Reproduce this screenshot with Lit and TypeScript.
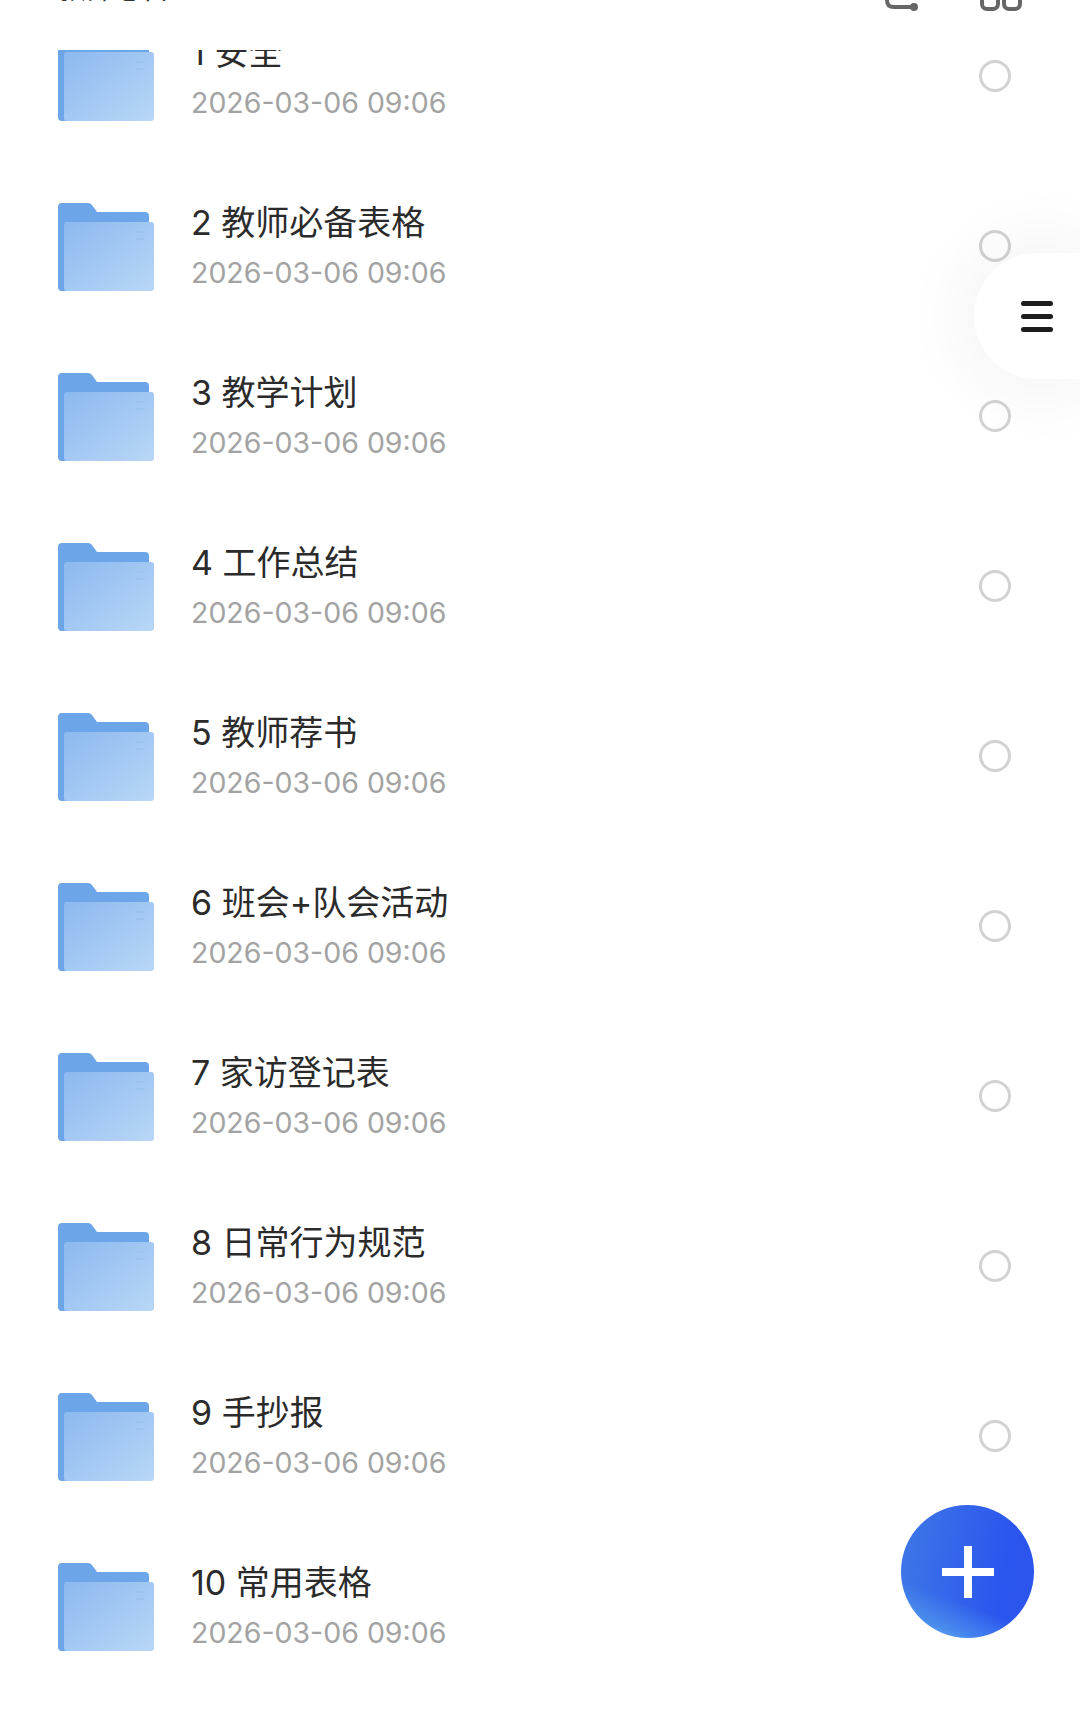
import { LitElement, css, html, svg } from 'lit';
import { customElement } from 'lit/decorators.js';

const rows = [
  '1 安全',
  '2 教师必备表格',
  '3 教学计划',
  '4 工作总结',
  '5 教师荐书',
  '6 班会+队会活动',
  '7 家访登记表',
  '8 日常行为规范',
  '9 手抄报',
  '10 常用表格',
];

const folderIcon = (id: number) => svg`
  <svg class="folder" viewBox="0 0 96 88" width="96" height="88">
    <defs>
      <linearGradient id="front${id}" x1="0" y1="0" x2="1" y2="1">
        <stop offset="0" stop-color="#8cb9ef" />
        <stop offset="1" stop-color="#b9d7f7" />
      </linearGradient>
    </defs>
    <path d="M0 4a4 4 0 0 1 4-4h26a5 5 0 0 1 4 2l5 7h48a4 4 0 0 1 4 4v71a4 4 0 0 1-4 4H4a4 4 0 0 1-4-4z" fill="#6ca6e8" />
    <path d="M6 22a3 3 0 0 1 3-3h84a3 3 0 0 1 3 3v63a3 3 0 0 1-3 3H9a3 3 0 0 1-3-3z" fill="url(#front${id})" />
    <path d="M78 29h8M78 36h8" stroke="#9cc3ee" stroke-width="2" />
  </svg>`;

@customElement('app-root')
export class AppRoot extends LitElement {
  static styles = css`
    :host {
      display: block;
    }

    .page {
      position: relative;
      height: 1711px;
      overflow: hidden;
      background: #fff;
      font-family: 'Inter', 'Noto Sans CJK SC', sans-serif;
    }

    .header {
      height: 50px;
      display: flex;
      align-items: flex-start;
      justify-content: space-between;
      padding: 0 58px;
    }

    .crumb {
      height: 4px;
      overflow: hidden;
      display: flex;
      align-items: flex-end;
      color: #333;
      font-size: 28px;
      line-height: 30px;
    }

    .tools {
      display: flex;
      gap: 61px;
    }

    .tools svg {
      display: block;
    }

    .list {
      height: 1661px;
      overflow: hidden;
    }

    .rows {
      margin-top: -59px;
    }

    .row {
      height: 170px;
      display: flex;
      align-items: center;
      padding: 0 69px 0 58px;
    }

    .folder {
      flex: none;
      margin: 2px 37px 0 0;
    }

    .text {
      flex: 1;
      padding-top: 4px;
    }

    .title {
      color: #2b2b2b;
      font-size: 34px;
      line-height: 50px;
    }

    .date {
      color: #a3a3a3;
      font-size: 28.5px;
      line-height: 50px;
    }

    .radio {
      flex: none;
      box-sizing: border-box;
      width: 32px;
      height: 32px;
      border: 3px solid #d2d2d2;
      border-radius: 50%;
    }

    .side {
      position: absolute;
      top: 253px;
      right: 0;
      width: 106px;
      height: 126px;
      display: flex;
      align-items: center;
      padding-left: 47px;
      box-sizing: border-box;
      background: #fff;
      border-radius: 63px 0 0 63px;
      box-shadow: 0 0 70px 12px rgba(0, 0, 0, 0.05);
    }

    .side span {
      display: flex;
      flex-direction: column;
      gap: 8px;
    }

    .side i {
      display: block;
      width: 32px;
      height: 5px;
      border-radius: 3px;
      background: #1d1d1d;
    }

    .fab {
      position: absolute;
      left: 901px;
      top: 1505px;
      width: 133px;
      height: 133px;
      border-radius: 50%;
      display: flex;
      align-items: center;
      justify-content: center;
      background:
        linear-gradient(20deg, rgba(125, 205, 245, 0.95) 0, rgba(90, 170, 240, 0.55) 14%, rgba(63, 120, 230, 0) 32%),
        linear-gradient(100deg, #3f78e6 0%, #2a55ee 75%, #2c55ea 100%);
    }

    .fab svg {
      display: block;
    }
  `;

  render() {
    return html`
      <div class="page">
        <div class="header">
          <div class="crumb"><span>教师必备</span></div>
          <div class="tools">
            <svg width="34" height="11" viewBox="0 0 34 11" fill="none" stroke="#666" stroke-width="4" stroke-linecap="round">
              <path d="M2 0c0 5 2 7 7 7h19" />
              <circle cx="29" cy="7" r="4" fill="#666" stroke="none" />
            </svg>
            <svg width="42" height="11" viewBox="0 0 42 11" fill="none" stroke="#666" stroke-width="4">
              <path d="M2 0v4a5 5 0 0 0 5 5h6a5 5 0 0 0 5-5V0" />
              <path d="M24 0v4a5 5 0 0 0 5 5h6a5 5 0 0 0 5-5V0" />
            </svg>
          </div>
        </div>
        <div class="list">
          <div class="rows">
            ${rows.map(
              (title, i) => html`
                <div class="row">
                  ${folderIcon(i)}
                  <div class="text">
                    <div class="title">${title}</div>
                    <div class="date">2026-03-06 09:06</div>
                  </div>
                  <div class="radio"></div>
                </div>
              `
            )}
          </div>
        </div>
        <div class="side">
          <span><i></i><i></i><i></i></span>
        </div>
        <div class="fab">
          <svg width="52" height="52" viewBox="0 0 52 52" fill="#fff">
            <rect x="22" y="0" width="8" height="52" />
            <rect x="0" y="22" width="52" height="8" />
          </svg>
        </div>
      </div>
    `;
  }
}
